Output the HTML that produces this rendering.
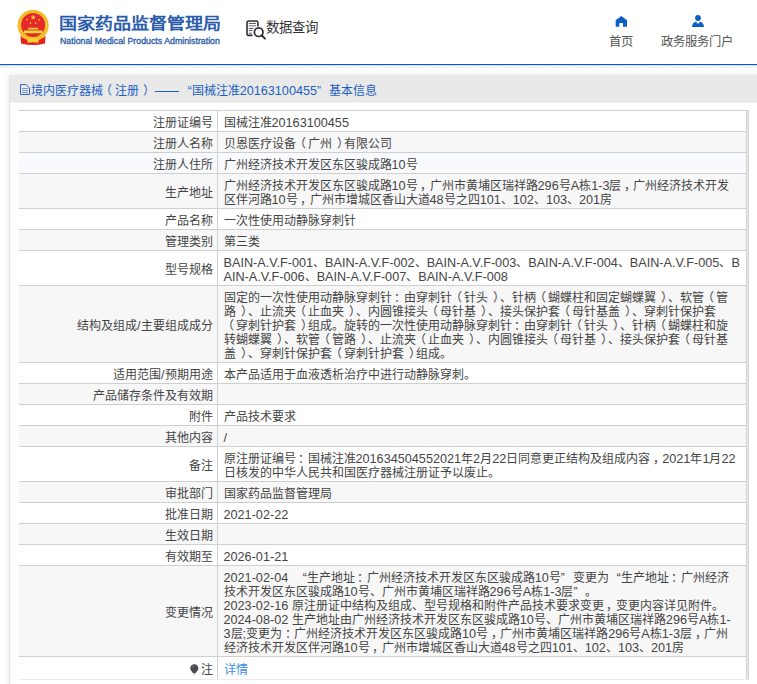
<!DOCTYPE html>
<html lang="zh-CN">
<head>
<meta charset="utf-8">
<style>
html,body{margin:0;padding:0;background:#fff;}
body{text-spacing-trim:space-all;width:757px;height:684px;overflow:hidden;position:relative;font-family:"Liberation Sans",sans-serif;color:#444;}
.abs{position:absolute;}
#emblem{left:17px;top:9px;width:32px;height:36px;}
#title{left:59px;top:14px;transform:scaleY(0.87);transform-origin:0 0;font-size:18px;font-weight:bold;color:#2a5caa;white-space:nowrap;line-height:22px;letter-spacing:0px;}
#eng{left:60px;top:35px;font-size:8.8px;color:#2a5aa8;-webkit-text-stroke:0.3px #2a5aa8;white-space:nowrap;line-height:12px;}
#sjicon{left:245px;top:19px;width:22px;height:21px;}
#sjtext{left:265.5px;top:18.5px;font-size:13.4px;color:#333;white-space:nowrap;line-height:18px;}
.nav{font-size:12.3px;color:#555;white-space:nowrap;line-height:14px;text-align:center;}
#home{left:615px;top:15px;width:13px;height:12px;}
#user{left:692px;top:15px;width:12px;height:13px;}
#navt1{left:597px;top:35px;width:48px;}
#navt2{left:661px;top:35px;width:72px;}
#bline{left:0;top:64px;width:757px;height:1px;background:#0558c0;}
#bline2{left:0;top:65px;width:757px;height:1px;background:#d4e2f4;}
#hatch1{left:0;top:66px;width:757px;height:1px;background:repeating-linear-gradient(90deg,#fff 0 1px,#dadada 1px 2px,#fff 2px 3px);}
#hatch2{left:0;top:67px;width:757px;height:1px;background:repeating-linear-gradient(90deg,#e2e2e2 0 1px,#fff 1px 3px);}
#panel{left:9px;top:75px;width:760px;height:620px;background:#fff;box-shadow:0 0 6px rgba(0,0,0,0.10);border-left:1px solid #e6e6e6;box-sizing:border-box;}
#phead{left:10px;top:75px;width:757px;height:27px;background:#e9e9e9;}
#phline{left:10px;top:102px;width:757px;height:1px;background:#eef1f8;}
#ptitle{left:31px;top:82.5px;font-size:12px;color:#1b5fc1;white-space:nowrap;line-height:16px;}
#docicon{left:20px;top:84px;width:10px;height:11px;}
table{position:absolute;left:19px;top:110px;border-collapse:collapse;table-layout:fixed;width:728px;}
th,td{border-top:1px solid #cfcfcf;border-bottom:1px solid #cfcfcf;font-weight:normal;font-size:12px;line-height:14px;padding:5px 0 1px;white-space:nowrap;vertical-align:middle;}
th{width:198px;text-align:right;padding-right:4px;box-sizing:border-box;border-right:1px solid #cfcfcf;}
td{padding-left:6px;border-right:1px solid #cfcfcf;}
tr.e{background:#f7f7f7;}
tr.h{background:#f9fafd;}
tr.o{background:#fff;}
i{font-style:normal;font-size:12.67px;}
b.ql,b.qr{font-weight:normal;display:inline-block;width:12px;}
b.ql{text-align:right;}
b.lp,b.rp{font-weight:normal;position:relative;}
b.lp{left:-1.5px;}
b.cm{font-weight:normal;position:relative;left:2.5px;}
b.rp{left:5px;}
tr.last th,tr.last td{border-bottom:0;padding-top:6px;padding-bottom:2px;}
b.qr{text-align:left;}
a{color:#3b8cf2;}
.pin{display:inline-block;width:9px;height:11px;vertical-align:-1px;margin-right:2px;}
.pin svg{display:block;}
#rb1{left:747px;top:111px;width:1px;height:568px;background:#eceef6;}
#rb2{left:748px;top:110px;width:1px;height:570px;background:#d2d2d2;}
#bot{left:19px;top:679px;width:729px;height:1px;background:#e8eaf4;}
</style>
</head>
<body>
<svg id="emblem" class="abs" viewBox="0 0 32 36">
 <path d="M3.5 27 Q16 33 28.5 27 L28 34.5 Q16 37.5 4 34.5 Z" fill="#e2231f"/>
 <circle cx="16.1" cy="16.4" r="15.6" fill="#f0bf2c"/>
 <circle cx="16.1" cy="16" r="12" fill="#e5292a"/>
 <polygon points="16.10,5.60 16.81,7.43 18.76,7.53 17.24,8.77 17.75,10.67 16.10,9.60 14.45,10.67 14.96,8.77 13.44,7.53 15.39,7.43" fill="#f5d23a"/>
 <polygon points="10.00,9.30 10.32,10.16 11.24,10.20 10.52,10.77 10.76,11.65 10.00,11.15 9.24,11.65 9.48,10.77 8.76,10.20 9.68,10.16" fill="#f5d23a"/>
 <polygon points="22.10,9.30 22.42,10.16 23.34,10.20 22.62,10.77 22.86,11.65 22.10,11.15 21.34,11.65 21.58,10.77 20.86,10.20 21.78,10.16" fill="#f5d23a"/>
 <polygon points="13.50,12.80 13.82,13.66 14.74,13.70 14.02,14.27 14.26,15.15 13.50,14.65 12.74,15.15 12.98,14.27 12.26,13.70 13.18,13.66" fill="#f5d23a"/>
 <polygon points="18.60,12.80 18.92,13.66 19.84,13.70 19.12,14.27 19.36,15.15 18.60,14.65 17.84,15.15 18.08,14.27 17.36,13.70 18.28,13.66" fill="#f5d23a"/>
 <path d="M11.5 18.8 L20.7 18.8 L21.5 20.6 L10.7 20.6 Z M7 21.5 L25.3 21.5 L25.5 24.2 L6.8 24.2 Z" fill="#f7d83c"/>
 <path d="M4.5 27.5 Q16 31.5 27.5 27.5 L27.5 28.5 Q16 33 4.5 28.5 Z" fill="#f0bf2c"/>
 <path d="M10 31 Q16 28 22 31 L21 34 Q16 32.5 11 34 Z" fill="#f5cf36"/>
</svg>
<div id="title" class="abs">国家药品监督管理局</div>
<div id="eng" class="abs">National Medical Products Administration</div>
<svg id="sjicon" class="abs" viewBox="0 0 22 21">
 <path d="M2 10 V14.5 Q2 16.4 3.5 16.4 H7.5" fill="none" stroke="#2f2f3c" stroke-width="1.6"/>
 <path d="M2 10 V3.5 Q2 2 3.5 2 H11.4 Q12.9 2 12.9 3.5 V7.5" fill="none" stroke="#2f2f3c" stroke-width="1.6"/>
 <path d="M3.8 4.4 H11 M3.8 9.4 H8.5 M3.8 11.4 H7.5" stroke="#3a3a48" stroke-width="0.9"/>
 <path d="M3.8 6.8 H11 M3.8 14.2 H7" stroke="#9a9aa2" stroke-width="1.4"/>
 <circle cx="13.7" cy="13.2" r="4.3" fill="none" stroke="#2a2a38" stroke-width="1.7"/>
 <path d="M16.6 16.3 L20 19.6" stroke="#2a2a38" stroke-width="1.9" stroke-linecap="round"/>
</svg>
<div id="sjtext" class="abs">数据查询</div>
<svg id="home" class="abs" viewBox="0 0 13 12">
 <path d="M6.3 0.9 L12 5.2 L12 11.8 L8 11.8 L8 8 L4.3 8 L4.3 11.8 L0.7 11.8 L0.7 5.2 Z" fill="#0a5fc8"/>
</svg>
<svg id="user" class="abs" viewBox="0 0 12 13">
 <circle cx="6" cy="3" r="2.9" fill="#0a5fc8"/>
 <path d="M0 12 Q0.5 7 4 6.8 L6 9 L8 6.8 Q11.5 7 12 12 Z" fill="#0a5fc8"/>
</svg>
<div id="navt1" class="abs nav">首页</div>
<div id="navt2" class="abs nav">政务服务门户</div>
<div id="bline" class="abs"></div>
<div id="bline2" class="abs"></div>
<div id="hatch1" class="abs"></div>
<div id="hatch2" class="abs"></div>
<div id="panel" class="abs"></div>
<div id="phead" class="abs"></div>
<div id="phline" class="abs"></div>
<svg id="docicon" class="abs" viewBox="0 0 10 11">
 <path d="M0.5 0.5 H6 L9.5 4 V10.5 H0.5 Z" fill="none" stroke="#2a64c8" stroke-width="1"/>
 <path d="M2 4.5 H8 M2 6.5 H8 M2 8.5 H8" stroke="#7b98d8" stroke-width="1"/>
</svg>
<div id="ptitle" class="abs">境内医疗器械<b class="lp" style="left:-3.5px">（</b>注册<b class="rp" style="left:3.5px">）</b><i style="font-size:13px"> </i>——<b class="ql" style="width:13px">“</b>国械注准<i>20163100455</i><b class="qr">”</b>基本信息</div>
<table>
<tr class="o"><th>注册证编号</th><td>国械注准<i>20163100455</i></td></tr>
<tr class="e"><th>注册人名称</th><td>贝恩医疗设备<b class="lp">（</b>广州<b class="rp">）</b>有限公司</td></tr>
<tr class="h"><th>注册人住所</th><td>广州经济技术开发区东区骏成路<i>10</i>号</td></tr>
<tr class="e"><th>生产地址</th><td>广州经济技术开发区东区骏成路<i>10</i>号<b class="cm">，</b>广州市黄埔区瑞祥路<i>296</i>号<i>A</i>栋<i>1-3</i>层<b class="cm">，</b>广州经济技术开发<br>区伴河路<i>10</i>号<b class="cm">，</b>广州市增城区香山大道<i>48</i>号之四<i>101</i>、<i>102</i>、<i>103</i>、<i>201</i>房</td></tr>
<tr class="o"><th>产品名称</th><td>一次性使用动静脉穿刺针</td></tr>
<tr class="e"><th>管理类别</th><td>第三类</td></tr>
<tr class="o"><th>型号规格</th><td><i>BAIN-A.V.F-001</i>、<i>BAIN-A.V.F-002</i>、<i>BAIN-A.V.F-003</i>、<i>BAIN-A.V.F-004</i>、<i>BAIN-A.V.F-005</i>、<i>B</i><br><i>AIN-A.V.F-006</i>、<i>BAIN-A.V.F-007</i>、<i>BAIN-A.V.F-008</i></td></tr>
<tr class="e"><th>结构及组成<i>/</i>主要组成成分</th><td>固定的一次性使用动静脉穿刺针<b class="cm">：</b>由穿刺针<b class="lp">（</b>针头<b class="rp">）</b>、针柄<b class="lp">（</b>蝴蝶柱和固定蝴蝶翼<b class="rp">）</b>、软管<b class="lp">（</b>管<br>路<b class="rp">）</b>、止流夹<b class="lp">（</b>止血夹<b class="rp">）</b>、内圆锥接头<b class="lp">（</b>母针基<b class="rp">）</b>、接头保护套<b class="lp">（</b>母针基盖<b class="rp">）</b>、穿刺针保护套<br><b class="lp">（</b>穿刺针护套<b class="rp">）</b>组成。旋转的一次性使用动静脉穿刺针<b class="cm">：</b>由穿刺针<b class="lp">（</b>针头<b class="rp">）</b>、针柄<b class="lp">（</b>蝴蝶柱和旋<br>转蝴蝶翼<b class="rp">）</b>、软管<b class="lp">（</b>管路<b class="rp">）</b>、止流夹<b class="lp">（</b>止血夹<b class="rp">）</b>、内圆锥接头<b class="lp">（</b>母针基<b class="rp">）</b>、接头保护套<b class="lp">（</b>母针基<br>盖<b class="rp">）</b>、穿刺针保护套<b class="lp">（</b>穿刺针护套<b class="rp">）</b>组成。</td></tr>
<tr class="o"><th>适用范围<i>/</i>预期用途</th><td>本产品适用于血液透析治疗中进行动静脉穿刺。</td></tr>
<tr class="e"><th>产品储存条件及有效期</th><td></td></tr>
<tr class="o"><th>附件</th><td>产品技术要求</td></tr>
<tr class="e"><th>其他内容</th><td><i>/</i></td></tr>
<tr class="o"><th>备注</th><td>原注册证编号<b class="cm">：</b>国械注准<i>201634504552021</i>年<i>2</i>月<i>22</i>日同意更正结构及组成内容<b class="cm">，</b><i>2021</i>年<i>1</i>月<i>22</i><br>日核发的中华人民共和国医疗器械注册证予以废止。</td></tr>
<tr class="e"><th>审批部门</th><td>国家药品监督管理局</td></tr>
<tr class="o"><th>批准日期</th><td><i>2021-02-22</i></td></tr>
<tr class="e"><th>生效日期</th><td></td></tr>
<tr class="o"><th>有效期至</th><td><i>2026-01-21</i></td></tr>
<tr class="e"><th>变更情况</th><td><i>2021-02-04 </i><b class="ql" style="width:15px">“</b>生产地址<b class="cm">：</b>广州经济技术开发区东区骏成路<i>10</i>号<b class="qr">”</b>变更为<b class="ql" style="width:12px">“</b>生产地址<b class="cm">：</b>广州经济<br>技术开发区东区骏成路<i>10</i>号、广州市黄埔区瑞祥路<i>296</i>号<i>A</i>栋<i>1-3</i>层<b class="qr">”</b>。<br><i>2023-02-16 </i>原注册证中结构及组成、型号规格和附件产品技术要求变更<b class="cm">，</b>变更内容详见附件。<br><i>2024-08-02 </i>生产地址由广州经济技术开发区东区骏成路<i>10</i>号、广州市黄埔区瑞祥路<i>296</i>号<i>A</i>栋<i>1-</i><br><i>3</i>层<i>;</i>变更为<b class="cm">：</b>广州经济技术开发区东区骏成路<i>10</i>号<b class="cm">，</b>广州市黄埔区瑞祥路<i>296</i>号<i>A</i>栋<i>1-3</i>层<b class="cm">，</b>广州<br>经济技术开发区伴河路<i>10</i>号<b class="cm">，</b>广州市增城区香山大道<i>48</i>号之四<i>101</i>、<i>102</i>、<i>103</i>、<i>201</i>房</td></tr>
<tr class="o last"><th><span class="pin"><svg width="9" height="11" viewBox="0 0 9 11"><path d="M4.3 0.3 C6.8 0.3 8.4 2 8.4 4.3 C8.4 6.3 6.6 7.6 5.6 9.2 L3 9.2 C2 7.6 0.2 6.3 0.2 4.3 C0.2 2 1.8 0.3 4.3 0.3 Z" fill="#4a4a52"/><path d="M2.2 3.8 Q2.4 2 4 1.6" stroke="#9a9aa6" stroke-width="0.7" fill="none"/><rect x="3" y="9.8" width="2.6" height="1" fill="#c8c8c8"/></svg></span>注</th><td><a>详情</a></td></tr>
</table>
<div id="rb1" class="abs"></div>
<div class="abs" style="left:747px;top:110px;width:1px;height:1px;background:#cfcfcf"></div>
<div id="rb2" class="abs"></div>
<div id="bot" class="abs"></div>
</body>
</html>
